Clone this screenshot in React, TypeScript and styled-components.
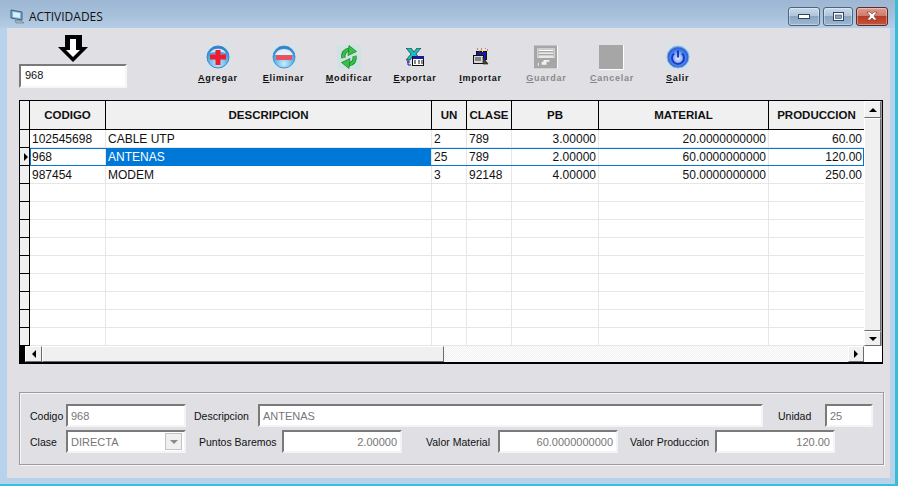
import React from "react";
import styled, { createGlobalStyle } from "styled-components";

const GlobalStyle = createGlobalStyle`
  * { box-sizing: border-box; }
  html, body { margin: 0; padding: 0; background: #fff; }
  body { font-family: "Liberation Sans", Arial, sans-serif; }
`;

const Win = styled.div`
  width: 898px;
  height: 486px;
  display: flex;
  flex-direction: column;
  background: #b9d2ec;
  border-right: 3px solid #38bcd8;
  border-bottom: 2px solid #38c0da;
  overflow: hidden;
`;

const TitleBar = styled.div`
  height: 28px;
  flex: none;
  display: flex;
  align-items: center;
  padding: 4px 7px 0 10px;
  background: linear-gradient(180deg, #9cb6d3 0%, #a9c2dc 60%, #b5cde6 100%);
`;

const TitleText = styled.span`
  margin-left: 4px;
  font-family: "Open Sans", sans-serif;
  font-size: 12px;
  color: #111;
  flex: 1;
`;

const WinButton = styled.div<{ $w: number; $close?: boolean }>`
  width: ${(p) => p.$w}px;
  height: 19px;
  margin-left: 3px;
  display: flex;
  align-items: center;
  justify-content: center;
  border: 1px solid ${(p) => (p.$close ? "#5e2a22" : "#51637a")};
  border-radius: 3px;
  box-shadow: inset 0 0 0 1px rgba(255, 255, 255, 0.35);
  background: ${(p) =>
    p.$close
      ? "linear-gradient(180deg, #dc9c90 0%, #cf7b6c 45%, #b73b26 50%, #c4543d 100%)"
      : "linear-gradient(180deg, #c9d9ea 0%, #afc5dc 45%, #8aa5c3 50%, #9db7d2 100%)"};
`;

const Client = styled.div`
  flex: none;
  width: 883px;
  height: 450px;
  margin-left: 7px;
  padding: 0 0 0 12px;
  background: #dfdfe4;
`;

const TopBlock = styled.div`
  height: 72px;
  display: flex;
`;

const SearchBlock = styled.div`
  width: 108px;
  padding-top: 7px;
  display: flex;
  flex-direction: column;
  align-items: center;
`;

const SearchInput = styled.div`
  width: 108px;
  height: 24px;
  margin-top: 2px;
  padding: 3px 0 0 4px;
  font-size: 11px;
  background: #fff;
  color: #111;
  border-style: solid;
  border-width: 2px;
  border-color: #7a7a7a #f6f6f8 #f6f6f8 #7a7a7a;
`;

const Toolbar = styled.div`
  display: flex;
  margin-left: 58px;
  padding-top: 17px;
`;

const ToolButton = styled.div<{ $disabled?: boolean }>`
  width: 65.7px;
  display: flex;
  flex-direction: column;
  align-items: center;
  color: ${(p) => (p.$disabled ? "#8a8a8a" : "#111")};
`;

const ToolIcon = styled.div`
  width: 24px;
  height: 24px;
  display: flex;
  align-items: center;
  justify-content: center;
`;

const ToolLabel = styled.span`
  margin-top: 3px;
  font-size: 9px;
  font-weight: bold;
  letter-spacing: 0.75px;
  line-height: 13px;
  white-space: nowrap;
`;

const DisabledSquare = styled.div`
  width: 25px;
  height: 25px;
  flex: none;
  background: #a6a6a6;
  border-right: 1px solid #fff;
  border-bottom: 1px solid #fff;
`;

const GridFrame = styled.div`
  width: 864px;
  height: 264px;
  display: grid;
  grid-template-columns: 844px 18px;
  grid-template-rows: 245px 17px;
  border: 1px solid #000;
  background: #fff;
`;

const Sheet = styled.div`
  display: flex;
  flex-direction: column;
  min-width: 0;
`;

const HeaderRow = styled.div`
  height: 29px;
  display: flex;
  flex: none;
  background: #f0f0f0;
  border-bottom: 1px solid #000;
`;

const HeaderCell = styled.div<{ $w: number; $last?: boolean }>`
  width: ${(p) => p.$w}px;
  display: flex;
  align-items: center;
  justify-content: center;
  font-size: 11.5px;
  font-weight: bold;
  color: #111;
  border-right: ${(p) => (p.$last ? "none" : "1px solid #000")};
`;

const Row = styled.div`
  position: relative;
  height: 18px;
  display: flex;
  flex: none;
`;

const RowHead = styled.div`
  width: 10px;
  flex: none;
  display: flex;
  align-items: center;
  justify-content: flex-end;
  background: #f0f0f0;
  border-right: 1px solid #000;
  border-bottom: 1px solid #000;
`;

const Cell = styled.div<{ $w: number; $right?: boolean; $fill?: boolean; $last?: boolean }>`
  width: ${(p) => p.$w}px;
  flex: none;
  padding: 1px 2px 0;
  font-size: 12px;
  line-height: 16px;
  white-space: nowrap;
  overflow: hidden;
  text-align: ${(p) => (p.$right ? "right" : "left")};
  color: ${(p) => (p.$fill ? "#fff" : "#111")};
  background: ${(p) => (p.$fill ? "#0078d7" : "#fff")};
  border-right: ${(p) => (p.$last ? "none" : "1px solid #e6e6e6")};
  border-bottom: 1px solid #e6e6e6;
`;

const SelectedOutline = styled.div`
  position: absolute;
  left: 10px;
  right: 0;
  top: 0;
  bottom: 0;
  border: 1px solid #0078d7;
  pointer-events: none;
`;

const ScrollBtn = styled.div<{ $w: number; $h: number }>`
  width: ${(p) => p.$w}px;
  height: ${(p) => p.$h}px;
  flex: none;
  display: flex;
  align-items: center;
  justify-content: center;
  background: #f0f0f0;
  border-style: solid;
  border-width: 1px;
  border-color: #fff #6b6b6b #6b6b6b #fff;
`;

const VScroll = styled.div`
  display: flex;
  flex-direction: column;
  border-right: 1px solid #a0a0a0;
`;

const VThumb = styled.div`
  flex: 1;
  background: #f0f0f0;
  border-style: solid;
  border-width: 1px;
  border-color: #fff #6b6b6b #6b6b6b #fff;
`;

const HScroll = styled.div`
  display: flex;
  border-bottom: 1px solid #000;
`;

const HBlack = styled.div`
  width: 5px;
  flex: none;
  background: #000;
`;

const HThumb = styled.div`
  width: 402px;
  flex: none;
  background: #f0f0f0;
  border-style: solid;
  border-width: 1px;
  border-color: #fff #6b6b6b #6b6b6b #fff;
`;

const HTrack = styled.div`
  flex: 1;
  background-color: #fff;
  background-image: repeating-conic-gradient(#f0f0f0 0 25%, #fff 0 50%);
  background-size: 2px 2px;
`;

const Corner = styled.div`
  background: #fff;
  border-bottom: 1px solid #000;
`;

const GroupBox = styled.div`
  width: 865px;
  height: 73px;
  margin-top: 28px;
  padding: 11px 0 0 10px;
  display: flex;
  flex-direction: column;
  gap: 3px;
  border: 1px solid #9c9c9c;
  box-shadow: inset 1px 1px 0 #f6f6f8, 1px 1px 0 #f6f6f8;
`;

const FormRow = styled.div`
  height: 23px;
  display: flex;
  align-items: center;
`;

const FieldLabel = styled.span<{ $w: number; $ml?: number }>`
  width: ${(p) => p.$w}px;
  margin-left: ${(p) => p.$ml ?? 0}px;
  flex: none;
  font-size: 10.5px;
  color: #111;
  white-space: nowrap;
`;

const Field = styled.div<{ $w: number; $right?: boolean }>`
  width: ${(p) => p.$w}px;
  height: 23px;
  flex: none;
  padding: 0 3px;
  display: flex;
  align-items: center;
  justify-content: ${(p) => (p.$right ? "flex-end" : "flex-start")};
  font-size: 11px;
  color: #767676;
  background: #fff;
  border-style: solid;
  border-width: 2px;
  border-color: #7a7a7a #f4f4f6 #f4f4f6 #7a7a7a;
`;

const ComboText = styled.span`
  flex: 1;
`;

const ComboBtn = styled.div`
  width: 17px;
  height: 17px;
  display: flex;
  align-items: center;
  justify-content: center;
  margin-right: -1px;
  background: #f0f0f0;
  border: 1px solid #c4c4c4;
`;

const COLS = [76, 326, 35, 45, 87, 170, 95];
const HEADERS = ["CODIGO", "DESCRIPCION", "UN", "CLASE", "PB", "MATERIAL", "PRODUCCION"];
const RIGHT_COLS = [4, 5, 6];

const ROWS = [
  ["102545698", "CABLE UTP", "2", "789", "3.00000", "20.0000000000", "60.00"],
  ["968", "ANTENAS", "25", "789", "2.00000", "60.0000000000", "120.00"],
  ["987454", "MODEM", "3", "92148", "4.00000", "50.0000000000", "250.00"],
  ...Array.from({ length: 9 }, () => ["", "", "", "", "", "", ""]),
];

const Tri = ({ dir, color = "#000" }: { dir: "up" | "down" | "left" | "right"; color?: string }) => {
  const pts = {
    up: "0,5 8,5 4,1",
    down: "0,1 8,1 4,5",
    left: "5,0 5,8 1,4",
    right: "1,0 1,8 5,4",
  }[dir];
  const vertical = dir === "up" || dir === "down";
  return (
    <svg width={vertical ? 8 : 6} height={vertical ? 6 : 8} viewBox={vertical ? "0 0 8 6" : "0 0 6 8"}>
      <polygon points={pts} fill={color} />
    </svg>
  );
};

const BallDefs = ({ id }: { id: string }) => (
  <defs>
    <radialGradient id={id} cx="0.5" cy="0.8" r="0.75">
      <stop offset="0" stopColor="#c8ecfb" />
      <stop offset="0.55" stopColor="#62b6ea" />
      <stop offset="1" stopColor="#2f7fc8" />
    </radialGradient>
  </defs>
);

const PlusIcon = () => (
  <svg width="24" height="24" viewBox="0 0 24 24">
    <BallDefs id="ballA" />
    <rect width="24" height="24" fill="#d6e3ea" />
    <circle cx="12" cy="12" r="11" fill="url(#ballA)" stroke="#3f86c6" />
    <path d="M4 8 A9 8 0 0 1 20 8 Q12 5 4 8Z" fill="#fff" opacity="0.8" />
    <path d="M9.500 5h5v4.500H20v5h-5.500V20h-5v-5.500H4v-5h5.500z" fill="#ee1c2e" />
  </svg>
);

const MinusIcon = () => (
  <svg width="24" height="24" viewBox="0 0 24 24">
    <BallDefs id="ballB" />
    <rect width="24" height="24" fill="#d6e3ea" />
    <circle cx="12" cy="12" r="11" fill="url(#ballB)" stroke="#4a90cc" />
    <path d="M3 10 A9.500 9 0 0 1 21 10 Z" fill="#eef6fb" opacity="0.9" />
    <rect x="4" y="10" width="16" height="5" rx="1" fill="#e8525c" />
  </svg>
);

const RefreshIcon = () => (
  <svg width="24" height="24" viewBox="0 0 24 24">
    <rect width="24" height="24" fill="#cfe3e3" />
    <path d="M6.500 13 C5.500 8.500 8 5 12.500 4.500" fill="none" stroke="#127a26" strokeWidth="4.200" />
    <path d="M17.500 11 C18.500 15.500 16 19 11.500 19.500" fill="none" stroke="#127a26" strokeWidth="4.200" />
    <path d="M6.500 13 C5.500 8.500 8 5 12.500 4.500" fill="none" stroke="#37bf48" strokeWidth="2.800" />
    <path d="M17.500 11 C18.500 15.500 16 19 11.500 19.500" fill="none" stroke="#37bf48" strokeWidth="2.800" />
    <path d="M12 0.500 L19.500 6.500 L11 10.500 Z" fill="#37bf48" stroke="#127a26" strokeWidth="0.7" />
    <path d="M12 23.500 L4.500 17.500 L13 13.500 Z" fill="#37bf48" stroke="#127a26" strokeWidth="0.7" />
  </svg>
);

const ExcelIcon = () => (
  <svg width="18" height="18" viewBox="0 0 18 18">
    <path d="M0 0h5l3 4 3-4h4l-5 6 5 6h-5l-3-4-3 4H0l5-6z" fill="#18c0bc" stroke="#111" strokeWidth="0.6" />
    <rect x="6.500" y="8.500" width="11" height="9" fill="#fff" stroke="#111" />
    <rect x="7" y="8" width="11" height="3" fill="#1a1a9c" />
    <path d="M8 13h2M12 13h2M15 13h2M8 15h2M12 15h2M15 15h2" stroke="#111" />
    <path d="M1 14h3M2 12v5h3" stroke="#1a1a9c" fill="none" />
  </svg>
);

const ImportIcon = () => (
  <svg width="18" height="18" viewBox="0 0 18 18">
    <path d="M5 1h1M9 1h1M13 0h1M15 2h1" stroke="#c02020" />
    <rect x="4.500" y="3.500" width="10" height="8" fill="#1a1a9c" stroke="#111" />
    <path d="M7 3l2-1 2 2" stroke="#e8d020" fill="none" />
    <rect x="1.500" y="7.500" width="10" height="8" fill="#d8d8d8" stroke="#111" />
    <path d="M3 10h6M3 12h6" stroke="#333" />
    <path d="M11 9l5 7h-5z" fill="#444" stroke="#111" strokeWidth="0.6" />
  </svg>
);

const SaveGlyph = () => (
  <svg width="25" height="25" viewBox="0 0 25 25">
    <rect x="0" y="0" width="25" height="25" fill="#a6a6a6" />
    <path d="M24.500 0v24.500H0" fill="none" stroke="#fff" />
    <path d="M5 5h15M5 8h15M5 11h15" stroke="#fff" strokeWidth="1.200" />
    <rect x="4" y="3.500" width="17" height="9" fill="none" stroke="#e8e8e8" />
    <path d="M8 20h5v-3h3v-2h-6v2H8zM4 18h1v3H4z" fill="#f2f2f2" />
  </svg>
);

const PowerIcon = () => (
  <svg width="24" height="24" viewBox="0 0 24 24">
    <defs>
      <radialGradient id="pw" cx="0.5" cy="0.55" r="0.55">
        <stop offset="0" stopColor="#e8f4ff" />
        <stop offset="0.65" stopColor="#3f7fe8" />
        <stop offset="0.85" stopColor="#2f5fd8" />
        <stop offset="1" stopColor="#9fd0f4" />
      </radialGradient>
    </defs>
    <rect width="24" height="24" fill="#d6e3ea" />
    <circle cx="12" cy="12" r="11" fill="url(#pw)" stroke="#8ab8dc" />
    <path d="M8 8.500a6 6 0 1 0 8 0" fill="none" stroke="#1f35c8" strokeWidth="2" />
    <path d="M12 5.500v7" stroke="#1f35c8" strokeWidth="2" />
  </svg>
);

const TOOLS = [
  { key: "A", rest: "gregar", icon: <PlusIcon /> },
  { key: "E", rest: "liminar", icon: <MinusIcon /> },
  { key: "M", rest: "odificar", icon: <RefreshIcon /> },
  { key: "E", rest: "xportar", icon: <ExcelIcon /> },
  { key: "I", rest: "mportar", icon: <ImportIcon /> },
  { key: "G", rest: "uardar", icon: <SaveGlyph />, disabled: true },
  { key: "C", rest: "ancelar", icon: <DisabledSquare />, disabled: true },
  { key: "S", rest: "alir", icon: <PowerIcon /> },
];

export default function App() {
  return (
    <Win>
      <GlobalStyle />
      <TitleBar>
        <svg width="15" height="15" viewBox="0 0 15 15">
          <path d="M1 1l11 2v8L1 9z" fill="#7fb4d8" stroke="#3d5f80" />
          <path d="M3 3l7 1v5L3 8z" fill="#d6f0fa" />
          <path d="M5 11l7 1 2 2H6z" fill="#a8b4c0" stroke="#5a6a7a" strokeWidth="0.5" />
        </svg>
        <TitleText>ACTIVIDADES</TitleText>
        <WinButton $w={32}>
          <svg width="13" height="7" viewBox="0 0 13 7">
            <rect x="0.500" y="1.500" width="11" height="4" fill="#fff" stroke="#33445a" />
          </svg>
        </WinButton>
        <WinButton $w={30}>
          <svg width="11" height="9" viewBox="0 0 11 9">
            <rect x="0.500" y="0.500" width="10" height="8" fill="#fff" stroke="#33445a" />
            <rect x="2.500" y="3" width="6" height="3.500" fill="#8aa5c3" stroke="#33445a" strokeWidth="0.6" />
          </svg>
        </WinButton>
        <WinButton $w={32} $close>
          <svg width="12" height="10" viewBox="0 0 12 10">
            <path d="M1 1h3l2 2 2-2h3L8 5l3 4H8L6 7 4 9H1l3-4z" fill="#fff" stroke="#6a2a20" strokeWidth="0.6" />
          </svg>
        </WinButton>
      </TitleBar>
      <Client>
        <TopBlock>
          <SearchBlock>
            <svg width="30" height="27" viewBox="0 0 30 27">
              <path d="M7 0h17v12h6L15 27 0 12h7z" fill="#000" />
              <path d="M12 4h6v11h4l-7 7-7-7h4z" fill="#fff" />
            </svg>
            <SearchInput>968</SearchInput>
          </SearchBlock>
          <Toolbar>
            {TOOLS.map((t) => (
              <ToolButton key={t.rest} $disabled={t.disabled}>
                <ToolIcon>{t.icon}</ToolIcon>
                <ToolLabel>
                  <u>{t.key}</u>
                  {t.rest}
                </ToolLabel>
              </ToolButton>
            ))}
          </Toolbar>
        </TopBlock>

        <GridFrame>
          <Sheet>
            <HeaderRow>
              <HeaderCell $w={10} />
              {HEADERS.map((h, i) => (
                <HeaderCell key={h} $w={COLS[i]} $last={i === HEADERS.length - 1}>
                  {h}
                </HeaderCell>
              ))}
            </HeaderRow>
            {ROWS.map((r, ri) => (
              <Row key={ri}>
                <RowHead>{ri === 1 && <Tri dir="right" />}</RowHead>
                {r.map((v, ci) => (
                  <Cell
                    key={ci}
                    $w={COLS[ci]}
                    $right={RIGHT_COLS.includes(ci)}
                    $fill={ri === 1 && ci === 1}
                    $last={ci === r.length - 1}
                  >
                    {v}
                  </Cell>
                ))}
                {ri === 1 && <SelectedOutline />}
              </Row>
            ))}
          </Sheet>
          <VScroll>
            <ScrollBtn $w={17} $h={17}>
              <Tri dir="up" />
            </ScrollBtn>
            <VThumb />
            <ScrollBtn $w={17} $h={15}>
              <Tri dir="down" />
            </ScrollBtn>
          </VScroll>
          <HScroll>
            <HBlack />
            <ScrollBtn $w={17} $h={16}>
              <Tri dir="left" />
            </ScrollBtn>
            <HThumb />
            <HTrack />
            <ScrollBtn $w={16} $h={16}>
              <Tri dir="right" />
            </ScrollBtn>
          </HScroll>
          <Corner />
        </GridFrame>

        <GroupBox>
          <FormRow>
            <FieldLabel $w={36}>Codigo</FieldLabel>
            <Field $w={120}>968</Field>
            <FieldLabel $w={64} $ml={8}>Descripcion</FieldLabel>
            <Field $w={505}>ANTENAS</Field>
            <FieldLabel $w={47} $ml={15}>Unidad</FieldLabel>
            <Field $w={48}>25</Field>
          </FormRow>
          <FormRow>
            <FieldLabel $w={36}>Clase</FieldLabel>
            <Field $w={120}>
              <ComboText>DIRECTA</ComboText>
              <ComboBtn>
                <Tri dir="down" color="#8a8a8a" />
              </ComboBtn>
            </Field>
            <FieldLabel $w={83} $ml={13}>Puntos Baremos</FieldLabel>
            <Field $w={120} $right>2.00000</Field>
            <FieldLabel $w={72} $ml={24}>Valor Material</FieldLabel>
            <Field $w={120} $right>60.0000000000</Field>
            <FieldLabel $w={85} $ml={12}>Valor Produccion</FieldLabel>
            <Field $w={120} $right>120.00</Field>
          </FormRow>
        </GroupBox>
      </Client>
    </Win>
  );
}
